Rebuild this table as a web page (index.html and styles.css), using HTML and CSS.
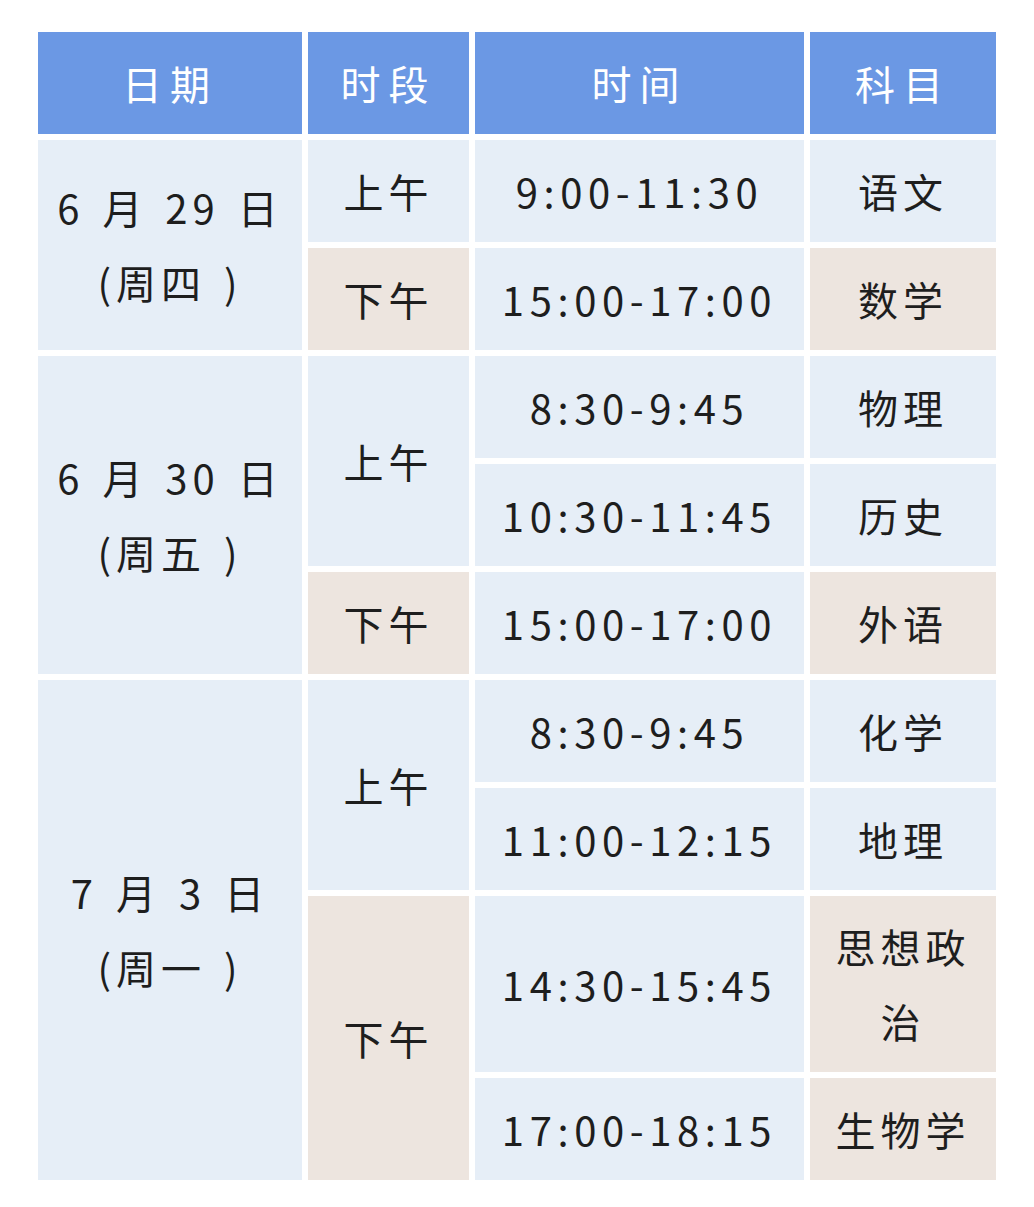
FILE: index.html
```html
<!DOCTYPE html>
<html lang="zh-CN">
<head>
<meta charset="utf-8">
<title>考试时间安排</title>
<link rel="stylesheet" href="styles.css">
</head>
<body>
<table class="schedule">
  <colgroup>
    <col class="c-date">
    <col class="c-period">
    <col class="c-time">
    <col class="c-subject">
  </colgroup>
  <thead>
    <tr class="r-head">
      <th>日期</th>
      <th>时段</th>
      <th>时间</th>
      <th>科目</th>
    </tr>
  </thead>
  <tbody>
    <tr class="r-std">
      <td class="blue date" rowspan="2">6 月 29 日<br>(周四 )</td>
      <td class="blue">上午</td>
      <td class="blue time">9:00-11:30</td>
      <td class="blue">语文</td>
    </tr>
    <tr class="r-std">
      <td class="beige">下午</td>
      <td class="blue time">15:00-17:00</td>
      <td class="beige">数学</td>
    </tr>
    <tr class="r-std">
      <td class="blue date" rowspan="3">6 月 30 日<br>(周五 )</td>
      <td class="blue" rowspan="2">上午</td>
      <td class="blue time">8:30-9:45</td>
      <td class="blue">物理</td>
    </tr>
    <tr class="r-std">
      <td class="blue time">10:30-11:45</td>
      <td class="blue">历史</td>
    </tr>
    <tr class="r-std">
      <td class="beige">下午</td>
      <td class="blue time">15:00-17:00</td>
      <td class="beige">外语</td>
    </tr>
    <tr class="r-std">
      <td class="blue date" rowspan="4">7 月 3 日<br>(周一 )</td>
      <td class="blue" rowspan="2">上午</td>
      <td class="blue time">8:30-9:45</td>
      <td class="blue">化学</td>
    </tr>
    <tr class="r-std">
      <td class="blue time">11:00-12:15</td>
      <td class="blue">地理</td>
    </tr>
    <tr class="r-tall">
      <td class="beige" rowspan="2">下午</td>
      <td class="blue time">14:30-15:45</td>
      <td class="beige">思想政治</td>
    </tr>
    <tr class="r-std">
      <td class="blue time">17:00-18:15</td>
      <td class="beige">生物学</td>
    </tr>
  </tbody>
</table>
</body>
</html>
```

FILE: styles.css
```css
html, body {
  margin: 0;
  padding: 0;
  background: #ffffff;
}

body {
  font-family: "Noto Sans CJK SC", "Noto Sans", sans-serif;
  color: #1e1e1e;
}

.schedule {
  border-collapse: separate;
  border-spacing: 6px;
  table-layout: fixed;
  width: 970px;
  margin: 26px 0 0 32px;
}

.c-date { width: 264px; }
.c-period { width: 161px; }
.c-time { width: 329px; }
.c-subject { width: 186px; }

.schedule th,
.schedule td {
  padding: 0 14px;
  text-align: center;
  vertical-align: middle;
  font-size: 40px;
  font-weight: 400;
  line-height: 75px;
  letter-spacing: 5px;
}

.schedule th {
  background: #6b98e4;
  color: #ffffff;
  letter-spacing: 8px;
}

.schedule .time {
  letter-spacing: 5.6px;
}

.schedule .date {
  word-spacing: 4px;
}

.r-head { height: 102px; }
.r-std { height: 102px; }
.r-tall { height: 176px; }

.blue { background: #e6eef7; }
.beige { background: #ede5df; }
```
